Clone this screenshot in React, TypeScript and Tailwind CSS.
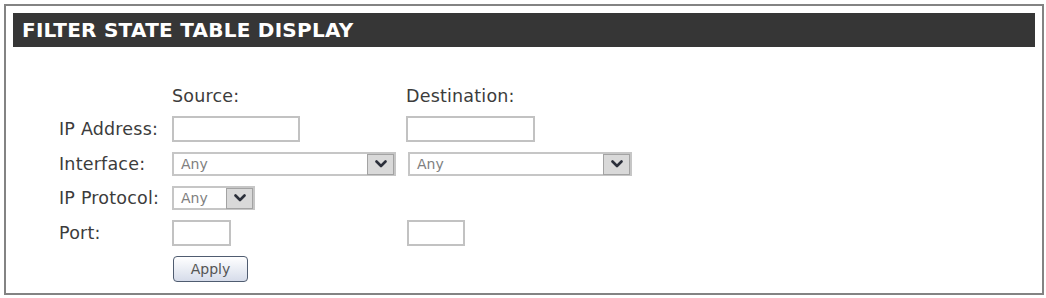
import React from 'react'

function TextBox({ w }: { w: string }) {
  return <div className={`${w} h-[26px] border-2 border-[#c2c2c2] bg-white`} />
}

function Select({ w }: { w: string }) {
  return (
    <div className={`${w} h-[24px] border-2 border-[#c6c6c6] bg-white flex items-center justify-between`}>
      <span className="pl-[7px] text-[14px] leading-none text-[#808080]">Any</span>
      <span className="w-[27px] h-[21px] bg-[#d9d9d9] border border-[#a3a3a3] flex items-center justify-center">
        <svg width="12" height="8" viewBox="0 0 12 8">
          <path d="M1.5 1.5 L6 6 L10.5 1.5" fill="none" stroke="#2b2f3a" strokeWidth="2.6" strokeLinecap="round" strokeLinejoin="round" />
        </svg>
      </span>
    </div>
  )
}

function Label({ children }: { children: React.ReactNode }) {
  return <div className="text-[17.5px] leading-[20px] text-[#3c3c3c] tracking-[0.2px]">{children}</div>
}

export default function App() {
  return (
    <div className="w-[1046px] h-[298px] bg-white pt-[4px] pl-[4px] font-['DejaVu_Sans',sans-serif]">
      <div className="w-[1040px] h-[291px] border-2 border-[#838383] px-[7px] pt-[7px]">
        <div className="h-[34px] bg-[#363636] flex items-center pl-[9px] text-white font-bold text-[20px] leading-none tracking-[0.25px]">
          FILTER STATE TABLE DISPLAY
        </div>

        <div className="mt-[39px] pl-[46px] grid grid-cols-[113px_234px_1fr] grid-rows-[20px_26px_24px_24px_26px_26px] gap-y-[10px] items-center">
          <div />
          <Label>Source:</Label>
          <Label>Destination:</Label>

          <Label>IP Address:</Label>
          <TextBox w="w-[128px]" />
          <TextBox w="w-[129px]" />

          <Label>Interface:</Label>
          <Select w="w-[224px]" />
          <div className="ml-[2px]">
            <Select w="w-[224px]" />
          </div>

          <Label>IP Protocol:</Label>
          <Select w="w-[83px]" />
          <div />

          <Label>Port:</Label>
          <TextBox w="w-[59px]" />
          <div className="ml-[1px]">
            <TextBox w="w-[58px]" />
          </div>

          <div />
          <div className="pl-[1px]">
            <button className="w-[75px] h-[26px] rounded-[4px] border border-[#4f5c70] bg-gradient-to-b from-white to-[#d6dcea] text-[14px] leading-none text-[#555]">
              Apply
            </button>
          </div>
          <div />
        </div>
      </div>
    </div>
  )
}
